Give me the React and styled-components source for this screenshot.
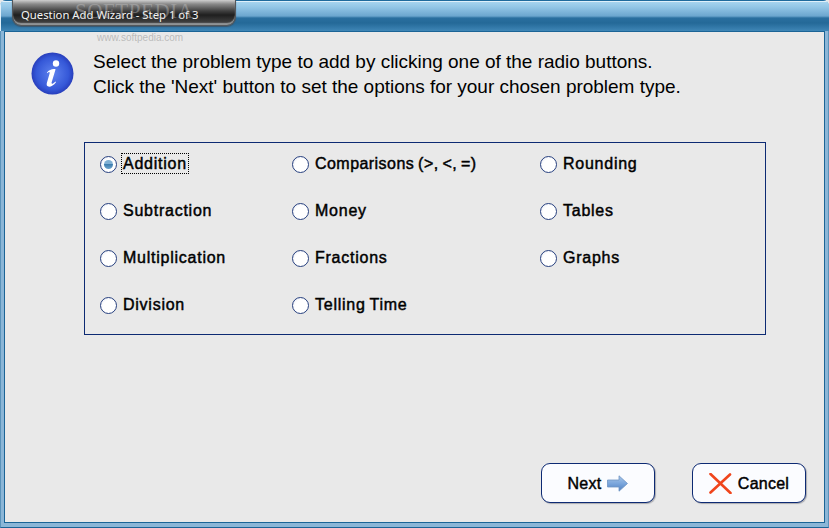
import React from "react";
import styled, { createGlobalStyle } from "styled-components";

const GlobalStyle = createGlobalStyle`
  html, body {
    margin: 0;
    padding: 0;
    background: #e9e9e9;
  }
  * {
    box-sizing: border-box;
  }
`;

const Window = styled.div`
  position: relative;
  width: 829px;
  height: 528px;
  display: flex;
  flex-direction: column;
  overflow: hidden;
  border-radius: 6px 6px 0 0;
  background: #7fadd1;
  font-family: "Liberation Sans", Arial, sans-serif;
  color: #000;
`;

const TitleBar = styled.div`
  height: 31px;
  flex: none;
  padding-left: 12px;
  border-top: 1px solid #1f6a9c;
  box-shadow: inset 1px 1px 0 #dff0fa;
  background: linear-gradient(
    to bottom,
    #a9d6f0 0,
    #93c6e6 6px,
    #6ca6cf 15px,
    #2a6f9f 17px,
    #246998 22px,
    #3f86b6 30px
  );
`;

const TitleTab = styled.div`
  width: 224px;
  height: 27px;
  margin-top: -2px;
  padding: 3px 0 0 8px;
  display: flex;
  align-items: center;
  border: 1px solid #54585c;
  border-radius: 0 0 9px 9px;
  box-shadow: inset 0 -2px 1px #8f9395, 0 1px 1px #39576e;
  background: linear-gradient(to bottom, #cfcfcf 0, #8a8a8a 4px, #3f3f3f 11px, #1f1f1f 15px, #3e3e3e 22px, #6e6e6e 26px);
  font-family: "Noto Sans", "Open Sans", sans-serif;
  font-size: 11.3px;
  color: #f4f4f4;
  white-space: nowrap;
`;

const Frame = styled.div`
  flex: 1;
  display: flex;
  padding: 0 3px 4px 3px;
  border-left: 1px solid #5a93bb;
  border-right: 1px solid #5a93bb;
  border-bottom: 1px solid #1b6496;
  background: #8bb6d7;
`;

const Content = styled.div`
  flex: 1;
  display: flex;
  flex-direction: column;
  border: 1px solid #1b6496;
  background: #e9e9e9;
`;

const Intro = styled.div`
  display: flex;
  align-items: flex-start;
  gap: 19px;
  padding: 20px 0 0 26px;
`;

const IntroText = styled.p`
  margin: -3px 0 0;
  font-size: 19px;
  line-height: 25px;
  letter-spacing: -0.02px;
  white-space: nowrap;
`;

const TypeGroup = styled.div`
  width: 682px;
  height: 193px;
  margin: 43px 0 0 79px;
  padding: 10px 0 0 15px;
  display: grid;
  grid-template-columns: 192px 248px 1fr;
  grid-template-rows: repeat(3, 47px) auto;
  border: 1px solid #0d2a73;
`;

const Option = styled.label`
  display: flex;
  align-items: flex-start;
  gap: 5px;
  font-size: 16px;
  letter-spacing: ${(p) => (p.$tight ? 0.45 : 0.75)}px;
  word-spacing: -1px;
  -webkit-text-stroke: 0.45px #000;
  white-space: nowrap;
`;

const RadioMark = styled.span`
  width: 17px;
  height: 17px;
  flex: none;
  display: flex;
  align-items: center;
  justify-content: center;
  margin-top: 3px;
  border-radius: 50%;
  border: 1px solid #27407f;
  background: radial-gradient(circle at 60% 60%, #ffffff 55%, #dfe3f0 100%);
`;

const RadioDot = styled.span`
  width: 9px;
  height: 9px;
  border-radius: 50%;
  background: linear-gradient(to bottom, #7fb0d4 0, #7fb0d4 45%, #3f7fb0 50%, #6da4cc 100%);
`;

const OptionText = styled.span`
  height: 21px;
  line-height: 19px;
  padding: 0 1px;
  margin-left: -1px;
  border: 1px dotted ${(p) => (p.$focused ? "#000" : "transparent")};
`;

const Footer = styled.div`
  display: flex;
  justify-content: flex-end;
  gap: 37px;
  margin-top: auto;
  padding: 0 18px 19px 0;
`;

const WizardButton = styled.button`
  width: 114px;
  height: 40px;
  display: flex;
  align-items: center;
  justify-content: center;
  gap: 6px;
  padding: 1px 0 0;
  border: 1px solid #0d2a73;
  border-radius: 9px;
  background: #fbfcff;
  box-shadow: 1px 1px 1px #a9aab0;
  font-family: "Liberation Sans", Arial, sans-serif;
  font-size: 16px;
  letter-spacing: 0.25px;
  -webkit-text-stroke: 0.45px #000;
  color: #000;
`;

const Watermark = styled.div`
  position: absolute;
  left: ${(p) => p.$left}px;
  top: ${(p) => p.$top}px;
  font-family: ${(p) => (p.$big ? '"Liberation Serif", serif' : '"Liberation Sans", sans-serif')};
  font-size: ${(p) => (p.$big ? 21 : 10)}px;
  letter-spacing: ${(p) => (p.$big ? 0.6 : 0)}px;
  color: ${(p) => (p.$big ? "rgba(200,200,200,0.4)" : "rgba(175,175,175,0.8)")};
  white-space: nowrap;
  pointer-events: none;
`;

const InfoIcon = () => (
  <svg width="43" height="43" viewBox="0 0 43 43" style={{ flex: "none" }}>
    <defs>
      <radialGradient id="infoBall" cx="0.5" cy="0.5" r="0.55">
        <stop offset="0" stopColor="#5f83ee" />
        <stop offset="0.7" stopColor="#3558d8" />
        <stop offset="1" stopColor="#2233b0" />
      </radialGradient>
    </defs>
    <circle cx="21.5" cy="21.5" r="21" fill="url(#infoBall)" />
    <circle cx="25" cy="11.5" r="3.2" fill="#fff" />
    <path
      d="M16 20.5 C18 17.6 22 16.4 24.6 17.2 L20.6 30.6 C20.3 31.8 21.2 32 22 31.4 L24.6 29.4 L25 30.2 C22.6 33.4 19.6 35 17.4 34.6 C15.6 34.2 15.4 32.6 15.9 30.8 L18.6 21.4 C18.9 20 18 19.8 17.2 20.4 L16.4 21.2 Z"
      fill="#fff"
    />
  </svg>
);

const ArrowIcon = () => (
  <svg width="21" height="17" viewBox="0 0 21 17">
    <defs>
      <linearGradient id="arrowFill" x1="0" y1="0" x2="0" y2="1">
        <stop offset="0" stopColor="#a9c6e8" />
        <stop offset="0.5" stopColor="#7ba6dc" />
        <stop offset="1" stopColor="#4f80c0" />
      </linearGradient>
    </defs>
    <path d="M0.5 5 H12 V0.8 L20.5 8.5 L12 16.2 V12 H0.5 Z" fill="url(#arrowFill)" stroke="#6f94c4" strokeWidth="0.8" />
  </svg>
);

const CrossIcon = () => (
  <svg width="23" height="21" viewBox="0 0 23 21">
    <path d="M1.5 1 L21.5 20 M21 1.5 L1.5 19.5" stroke="#f0451c" strokeWidth="2.6" strokeLinecap="round" fill="none" />
  </svg>
);

const problemTypes = [
  "Addition",
  "Comparisons (>, <, =)",
  "Rounding",
  "Subtraction",
  "Money",
  "Tables",
  "Multiplication",
  "Fractions",
  "Graphs",
  "Division",
  "Telling Time",
];

export default function App() {
  return (
    <>
      <GlobalStyle />
      <Window>
        <TitleBar>
          <TitleTab>Question Add Wizard - Step 1 of 3</TitleTab>
        </TitleBar>
        <Frame>
          <Content>
            <Intro>
              <InfoIcon />
              <IntroText>
                Select the problem type to add by clicking one of the radio buttons.
                <br />
                Click the 'Next' button to set the options for your chosen problem type.
              </IntroText>
            </Intro>
            <TypeGroup>
              {problemTypes.map((name, i) => (
                <Option key={name} $tight={i === 1}>
                  <RadioMark>{i === 0 && <RadioDot />}</RadioMark>
                  <OptionText $focused={i === 0}>{name}</OptionText>
                </Option>
              ))}
            </TypeGroup>
            <Footer>
              <WizardButton>
                Next <ArrowIcon />
              </WizardButton>
              <WizardButton>
                <CrossIcon /> Cancel
              </WizardButton>
            </Footer>
          </Content>
        </Frame>
        <Watermark $big $left={75} $top={-1}>SOFTPEDIA</Watermark>
        <Watermark $left={97} $top={32}>www.softpedia.com</Watermark>
      </Window>
    </>
  );
}
